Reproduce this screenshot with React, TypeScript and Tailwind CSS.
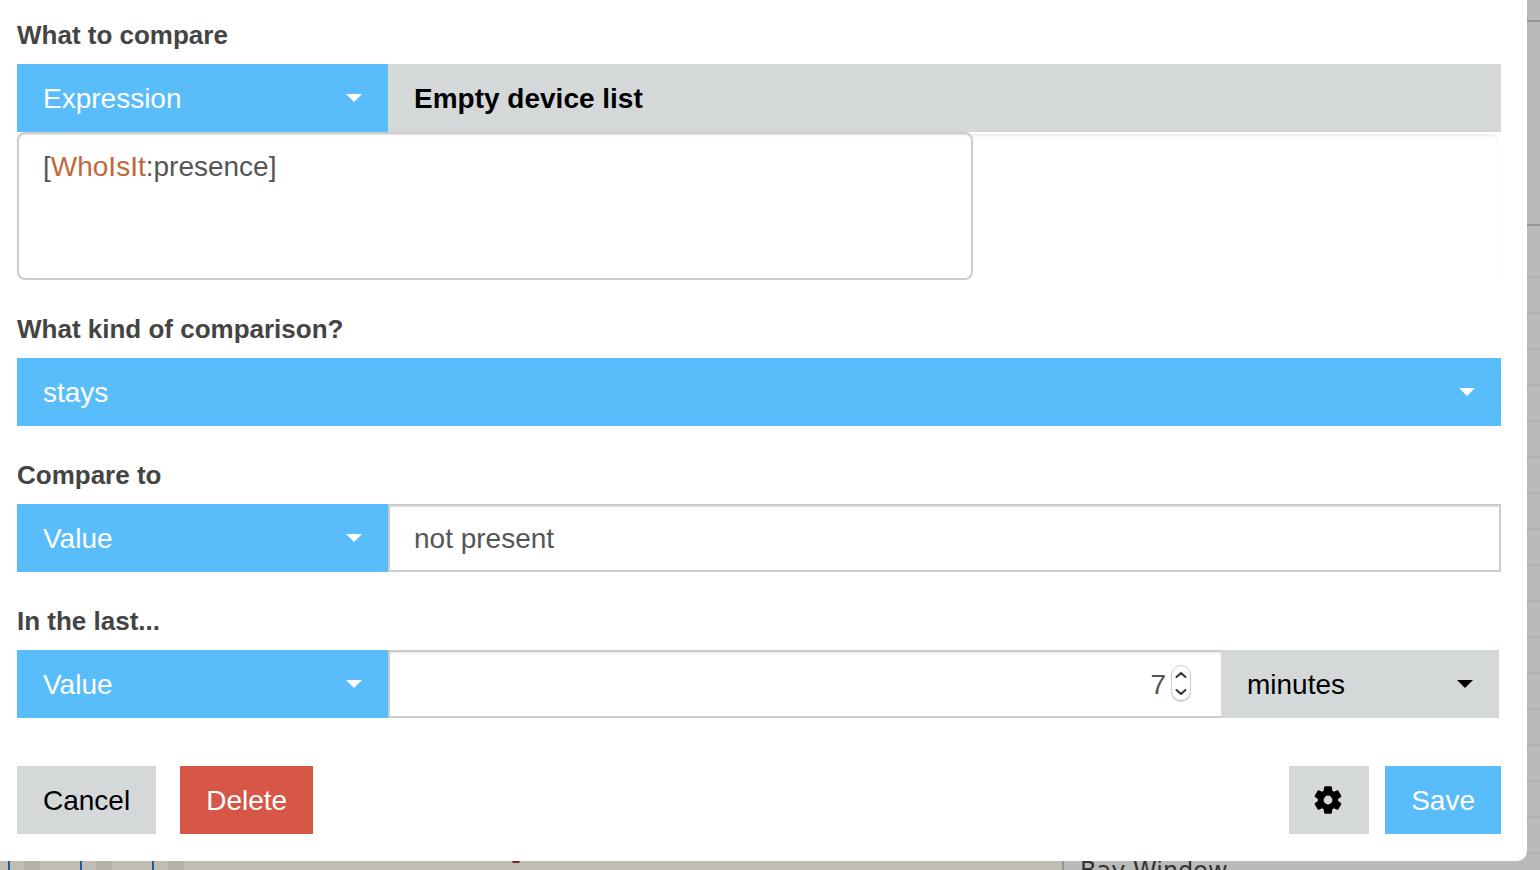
import { useState } from 'react';
import type { ReactNode } from 'react';
import clsx from 'clsx';

interface FieldProps {
  id: string;
  label: string;
  children: ReactNode;
}

function Field({ id, label, children }: FieldProps) {
  return (
    <div>
      <label htmlFor={id} className="mb-2 block pb-0.5 text-[26px] leading-[38px] font-bold text-[#444]">
        {label}
      </label>
      {children}
    </div>
  );
}

interface DropdownProps {
  id?: string;
  label?: string;
  options: string[];
  tone?: 'blue' | 'gray';
  className?: string;
}

function Dropdown({ id, label, options, tone = 'blue', className }: DropdownProps) {
  return (
    <div
      className={clsx(
        'relative shrink-0',
        tone === 'blue' ? 'bg-[#58bdfa] text-white' : 'bg-[#d4d8d9] text-black',
        className,
      )}
    >
      <select
        id={id}
        aria-label={label}
        className="h-[68px] w-full appearance-none bg-transparent pt-0.5 pr-14 pl-[26px] text-[28px] outline-none"
      >
        {options.map((option) => (
          <option key={option} className="text-black">
            {option}
          </option>
        ))}
      </select>
      <svg
        viewBox="0 0 16 8"
        className="pointer-events-none absolute top-[30px] right-[26px] h-2 w-4 fill-current"
      >
        <path d="M0 0h16L8 8z" />
      </svg>
    </div>
  );
}

function GearIcon() {
  return (
    <svg viewBox="-14 -14 28 28" className="size-7 fill-current">
      <circle r="7.3" fill="none" stroke="currentColor" strokeWidth="5.8" />
      {[0, 60, 120, 180, 240, 300].map((angle) => (
        <path
          key={angle}
          d="M-4.4-8.5-3.8-12.900q.1-.8.9-.8h5.800q.8 0 .9.8L4.400-8.500z"
          transform={`rotate(${angle})`}
        />
      ))}
    </svg>
  );
}

const inputShadow = 'shadow-[inset_0_2px_2px_-1px_rgba(0,0,0,0.12)]';

function ExpressionEditor() {
  const [text, setText] = useState('[WhoIsIt:presence]');

  return (
    <div className="grid">
      <div className="mt-0.5 mr-0.5 rounded-lg shadow-[inset_0_2px_3px_rgba(0,0,0,0.08)] [grid-area:1/1]" />
      <div className="grid w-[956px] max-w-full rounded-lg bg-white text-[28px] leading-[38px] [grid-area:1/1]">
        {/* device names are coloured underneath the transparent textarea text */}
        <div
          aria-hidden="true"
          className="px-[26px] py-4 break-words whitespace-pre-wrap text-[#555] [grid-area:1/1]"
        >
          {text.split(/(\w+)(?=:)/).map((part, i) => (
            <span key={i} className={i % 2 === 1 ? 'text-[#c0693d]' : undefined}>
              {part}
            </span>
          ))}
        </div>
        <textarea
          aria-label="Expression"
          value={text}
          spellCheck={false}
          onChange={(e) => setText(e.target.value)}
          className={clsx(
            'h-[148px] resize-none rounded-lg border-2 border-[#ccc] bg-transparent px-6 py-3.5 text-transparent caret-[#555] outline-none [grid-area:1/1]',
            inputShadow,
          )}
        />
      </div>
    </div>
  );
}

function DurationInput() {
  const [value, setValue] = useState(7);

  return (
    <div
      className={clsx(
        'flex h-[68px] min-w-0 flex-1 items-center border-2 border-r-0 border-[#ccc] pr-[30px]',
        inputShadow,
      )}
    >
      <input
        type="number"
        aria-label="Duration"
        value={value}
        onChange={(e) => setValue(Number(e.target.value))}
        className="min-w-0 flex-1 [appearance:textfield] bg-transparent pt-0.5 pr-[5px] text-right text-[28px] text-[#555] outline-none [&::-webkit-inner-spin-button]:appearance-none"
      />
      <div className="mb-0.5 flex h-9 w-5 flex-col rounded-full border border-[#d0d0d0] bg-white text-[#333] shadow-[0_1px_1px_rgba(0,0,0,0.2)]">
        <button
          type="button"
          aria-label="Increase"
          onClick={() => setValue(value + 1)}
          className="flex flex-1 items-center justify-center"
        >
          <svg viewBox="0 0 12 8" className="h-2 w-3 fill-none stroke-current stroke-2">
            <path d="M1.5 6 6 2l4.5 4" strokeLinecap="round" strokeLinejoin="round" />
          </svg>
        </button>
        <button
          type="button"
          aria-label="Decrease"
          onClick={() => setValue(value - 1)}
          className="flex flex-1 items-center justify-center"
        >
          <svg viewBox="0 0 12 8" className="h-2 w-3 fill-none stroke-current stroke-2">
            <path d="M1.5 2 6 6l4.5-4" strokeLinecap="round" strokeLinejoin="round" />
          </svg>
        </button>
      </div>
    </div>
  );
}

const emptyRows = Array.from({ length: 16 }, (_, i) => i);

// The dimmed page behind the dialog
function Backdrop() {
  return (
    <div className="absolute inset-0 flex overflow-hidden bg-[#bababa]">
      <div className="flex flex-1 items-end bg-[#c0bdb4] pl-2">
        {[0, 1, 2].map((n) => (
          <div key={n} className="h-full w-[72px] border-l-2 border-[#2459a0] pl-3.5">
            <div className="h-full w-4 bg-[#b5b2ab]" />
          </div>
        ))}
        <div className="mb-[7px] ml-72 h-0.5 w-2 rounded-b-sm bg-[#7a2424]" />
      </div>
      <div className="w-[478px] border-l-2 border-[#969696]">
        <div className="h-5" />
        <div className="h-[204px] border-t-2 border-[#969696] bg-[#b8b8b8]" />
        <div className="h-[52px] border-t-2 border-[#969696]" />
        {emptyRows.map((row) => (
          <div key={row} className="h-9 border-t-2 border-[#b0b0b0]" />
        ))}
        <div className="h-9 border-t-2 border-[#b0b0b0] pl-4 font-['DejaVu_Sans',sans-serif] text-2xl leading-[34px] text-[#333]">
          Bay Window
        </div>
      </div>
    </div>
  );
}

const buttonClass = 'h-[68px] px-[26px] pt-0.5 text-[28px]';

export default function App() {
  return (
    <div className="relative min-h-screen overflow-hidden font-['Liberation_Sans',Arial,sans-serif]">
      <Backdrop />
      <form
        onSubmit={(e) => e.preventDefault()}
        className="relative mr-[13px] rounded-br-[10px] bg-white pt-4 pr-[26px] pb-[27px] pl-[17px]"
      >
        <div className="flex flex-col gap-[30px]">
          <Field id="operand" label="What to compare">
            <div className="flex bg-[#d4d8d9]">
              <Dropdown id="operand" options={['Expression', 'Value', 'Variable']} className="w-1/4" />
              <button type="button" className={clsx(buttonClass, 'flex-1 text-left font-bold')}>
                Empty device list
              </button>
            </div>
            <ExpressionEditor />
          </Field>

          <Field id="comparison" label="What kind of comparison?">
            <Dropdown id="comparison" options={['stays', 'changes', 'is']} />
          </Field>

          <Field id="compare-to" label="Compare to">
            <div className="flex">
              <Dropdown id="compare-to" options={['Value', 'Variable', 'Expression']} className="w-1/4" />
              <input
                type="text"
                aria-label="Comparison value"
                defaultValue="not present"
                className={clsx(
                  'h-[68px] min-w-0 flex-1 border-2 border-[#ccc] px-6 pt-0.5 text-[28px] text-[#555] outline-none',
                  inputShadow,
                )}
              />
            </div>
          </Field>

          <Field id="duration" label="In the last...">
            <div className="flex">
              <Dropdown id="duration" options={['Value', 'Variable', 'Expression']} className="w-1/4" />
              <DurationInput />
              <Dropdown
                label="Duration unit"
                options={['minutes', 'seconds', 'hours']}
                tone="gray"
                className="mr-0.5 w-[278px]"
              />
            </div>
          </Field>
        </div>

        <div className="mt-12 flex">
          <button type="button" className={clsx(buttonClass, 'mr-6 bg-[#d4d8d9] text-black')}>
            Cancel
          </button>
          <button type="button" className={clsx(buttonClass, 'bg-[#d65745] text-white')}>
            Delete
          </button>
          <button
            type="button"
            aria-label="Settings"
            className="mr-4 ml-auto flex h-[68px] w-20 items-center bg-[#d4d8d9] pl-[25px] text-black"
          >
            <GearIcon />
          </button>
          <button type="submit" className={clsx(buttonClass, 'bg-[#58bdfa] text-white')}>
            Save
          </button>
        </div>
      </form>
    </div>
  );
}
